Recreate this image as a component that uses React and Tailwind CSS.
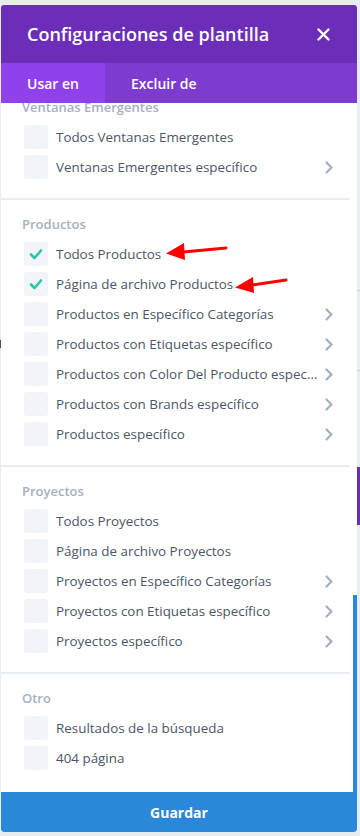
import React from "react";

const font = { fontFamily: '"Open Sans", "Noto Sans", sans-serif' };

function Chevron() {
  return (
    <svg width="8" height="13" viewBox="0 0 8 13" className="shrink-0">
      <path d="M1.5 1.5 L6.5 6.5 L1.5 11.5" fill="none" stroke="#a3b0c2" strokeWidth="2.2" strokeLinecap="round" strokeLinejoin="round" />
    </svg>
  );
}

function Check() {
  return (
    <svg width="14" height="12" viewBox="0 0 14 12">
      <path d="M2 6.5 L5.5 10 L12 2.5" fill="none" stroke="#29c4a9" strokeWidth="2.6" strokeLinecap="round" strokeLinejoin="round" />
    </svg>
  );
}

function Row({ label, checked, more }) {
  return (
    <div className="flex items-center h-[30px] pl-[23px] pr-[24px]">
      <div className="w-[24px] h-[24px] rounded-[3px] bg-[#f1f4f8] flex items-center justify-center shrink-0">
        {checked && <Check />}
      </div>
      <div className="ml-[8px] flex-1 min-w-0 truncate text-[13.4px] leading-[20px] text-[#4a5666]">{label}</div>
      {more && <div className="ml-[5px]"><Chevron /></div>}
    </div>
  );
}

function Section({ title, items, last }) {
  return (
    <div>
      <div className="pt-[15px] pb-[16px]">
        <div className="px-[21px] text-[13px] leading-[18px] font-semibold text-[#a3b0c2] mb-[6px]">{title}</div>
        {items.map((it, i) => (
          <Row key={i} {...it} />
        ))}
      </div>
      {!last && <div className="h-[2px] bg-[#e8edf3] w-[349px]" />}
    </div>
  );
}

export default function App() {
  return (
    <div className="relative w-[360px] h-[836px] bg-[#e8edf2] overflow-hidden" style={font}>
      {/* background page hints */}
      <div className="absolute right-0 top-[467px] w-[3px] h-[58px] bg-[#6c2eb9]" />
      <div className="absolute right-0 top-[290px] w-[3px] h-[1px] bg-[#c9d0d8]" />
      <div className="absolute right-0 top-[370px] w-[3px] h-[1px] bg-[#c9d0d8]" />
      <div className="absolute left-0 top-[340px] w-[1px] h-[8px] bg-[#555]" />

      <div className="ml-[1px] mt-[5px] w-[356px] h-[827px] flex flex-col rounded-[3px] overflow-hidden">
        <div className="h-[58px] bg-[#6c2eb9] flex items-center justify-between pl-[26px] pr-[27px] shrink-0">
          <div className="text-white text-[18px] font-semibold leading-[24px]">Configuraciones de plantilla</div>
          <svg width="13" height="13" viewBox="0 0 13 13">
            <path d="M1.5 1.5 L11.5 11.5 M11.5 1.5 L1.5 11.5" stroke="#fff" strokeWidth="2.4" strokeLinecap="round" />
          </svg>
        </div>
        <div className="h-[40px] bg-[#7e3bd0] flex shrink-0">
          <div className="w-[104px] bg-[#8f42ec] flex items-center pl-[26px] text-white text-[14px] font-semibold">Usar en</div>
          <div className="flex items-center pl-[26px] text-white text-[14px] font-semibold">Excluir de</div>
        </div>
        <div className="relative flex-1 bg-white overflow-hidden">
          <div className="mt-[-20px]">
            <Section
              title="Ventanas Emergentes"
              items={[
                { label: "Todos Ventanas Emergentes" },
                { label: "Ventanas Emergentes específico", more: true },
              ]}
            />
            <Section
              title="Productos"
              items={[
                { label: "Todos Productos", checked: true },
                { label: "Página de archivo Productos", checked: true },
                { label: "Productos en Específico Categorías", more: true },
                { label: "Productos con Etiquetas específico", more: true },
                { label: "Productos con Color Del Producto específico", more: true },
                { label: "Productos con Brands específico", more: true },
                { label: "Productos específico", more: true },
              ]}
            />
            <Section
              title="Proyectos"
              items={[
                { label: "Todos Proyectos" },
                { label: "Página de archivo Proyectos" },
                { label: "Proyectos en Específico Categorías", more: true },
                { label: "Proyectos con Etiquetas específico", more: true },
                { label: "Proyectos específico", more: true },
              ]}
            />
            <Section
              title="Otro"
              last
              items={[
                { label: "Resultados de la búsqueda" },
                { label: "404 página" },
              ]}
            />
          </div>
          <div className="absolute right-0 top-[492px] bottom-0 w-[4px] bg-[#2b87da]" />
        </div>
        <div className="h-[40px] bg-[#2b87da] flex items-center justify-center text-white text-[14px] font-bold shrink-0 rounded-b-[3px]">
          Guardar
        </div>
      </div>

      {/* red annotation arrows */}
      <svg className="absolute left-0 top-0 pointer-events-none" width="360" height="836" viewBox="0 0 360 836">
        <line x1="226" y1="248" x2="178" y2="252.5" stroke="#f00" strokeWidth="3" strokeLinecap="round" />
        <polygon points="166,253.5 184,243 185,260" fill="#f00" />
        <line x1="286" y1="280" x2="246" y2="286" stroke="#f00" strokeWidth="3" strokeLinecap="round" />
        <polygon points="235,287.5 253,277 254,293" fill="#f00" />
      </svg>
    </div>
  );
}
